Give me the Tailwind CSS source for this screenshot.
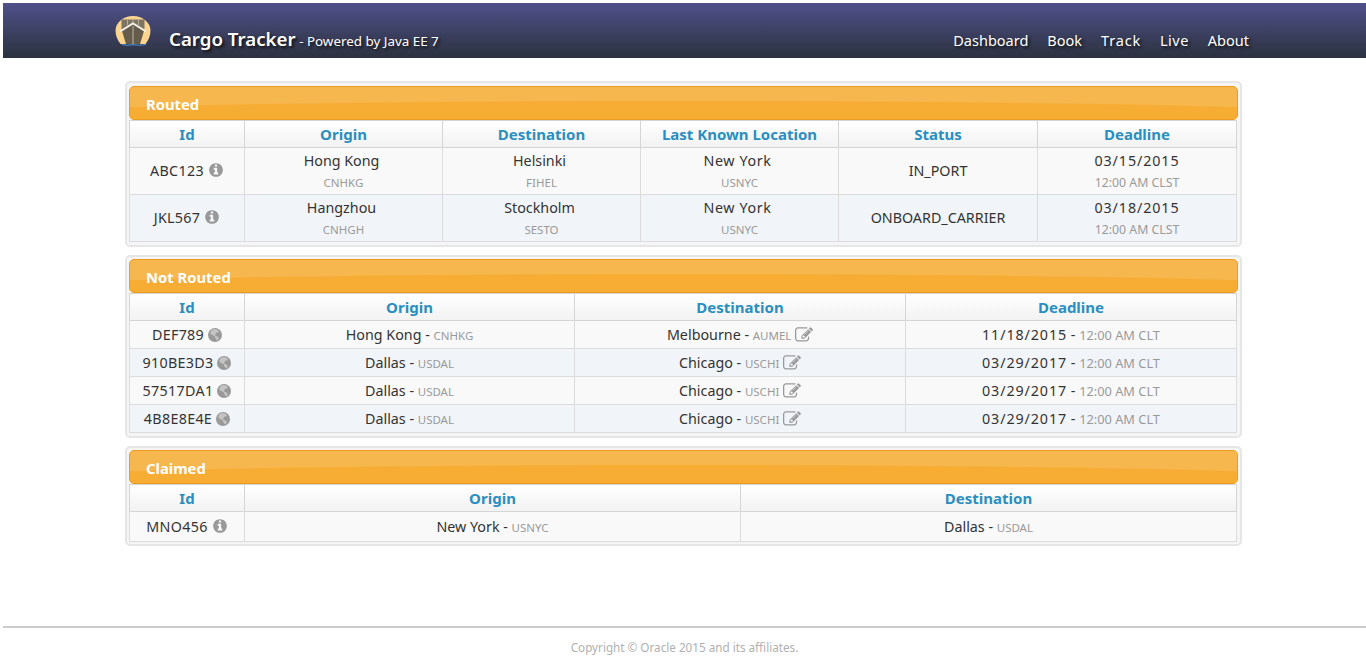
<!doctype html>
<html lang="en"><head><meta charset="utf-8"><title>Cargo Tracker</title>
<script src="https://cdn.jsdelivr.net/npm/@tailwindcss/browser@4"></script></head>
<body class="bg-white font-['Noto_Sans',sans-serif] text-[14.300px] text-[#333]">
<svg class="hidden"><defs>
<symbol id="info" viewBox="0 0 1792 1792"><path d="M1152 1376v-160q0-14-9-23t-23-9h-96v-512q0-14-9-23t-23-9h-320q-14 0-23 9t-9 23v160q0 14 9 23t23 9h96v320h-96q-14 0-23 9t-9 23v160q0 14 9 23t23 9h448q14 0 23-9t9-23zm-128-896v-160q0-14-9-23t-23-9h-192q-14 0-23 9t-9 23v160q0 14 9 23t23 9h192q14 0 23-9t9-23zm640 416q0 209-103 385.5t-279.5 279.5-385.5 103-385.5-103-279.5-279.5-103-385.5 103-385.5 279.5-279.5 385.5-103 385.5 103 279.5 279.5 103 385.5z"/></symbol>
<symbol id="globe" viewBox="0 0 14 14"><circle cx="7" cy="7" r="7"/><path fill="#e8e8e8" d="M4 1.500l3-.5 3 1 1 2-3 1-1 2.500 2.500 1 1.500 2-2 2-1.500-2-1-2.500-2.500-1-2-2 1-2z" opacity="0.550"/></symbol>
<symbol id="edit" viewBox="0 0 1792 1792"><path d="M888 1184l116-116-152-152-116 116v56h96v96h56zm440-720q-16-16-33 1l-350 350q-17 17-1 33t33-1l350-350q17-17 1-33zm80 594v190q0 119-84.500 203.500t-203.500 84.500h-832q-119 0-203.500-84.500t-84.500-203.500v-832q0-119 84.500-203.500t203.500-84.500h832q63 0 117 25 15 7 18 23 3 17-9 29l-49 49q-14 14-32 8-23-6-45-6h-832q-66 0-113 47t-47 113v832q0 66 47 113t113 47h832q66 0 113-47t47-113v-126q0-13 9-22l64-64q15-15 35-7t20 29zm-96-738l288 288-672 672h-288v-288zm444 132l-92 92-288-288 92-92q28-28 68-28t68 28l152 152q28 28 28 68t-28 68z"/></symbol>
</defs></svg>

<header class="mt-[3px] ml-[3px] h-[55px] bg-gradient-to-b from-[#50508a] to-[#2c3240] flex items-end [text-shadow:2px_2px_3px_#111] text-white">
  <svg class="ml-[112px] mb-[12px] w-[36px] h-[30px]" viewBox="0 0 36 30">
    <path fill="#fbd590" d="M18 0a17.500 15 0 0 1 17.500 14c0 6-2 10-5 14H5.500C2.500 24 .5 20 .5 14A17.500 15 0 0 1 18 0z"/>
    <path fill="#7d7463" d="M6.500 3.500h23V13h-23z"/>
    <path fill="#b8ad96" d="M12 3.500h1V9h-1zM23 3.500h1V9h-1zM17.500 3.500h1V7h-1z"/>
    <path fill="#655c4b" d="M18 8l11 7-4 13H11L7 15z"/>
    <path fill="#a39c8c" d="M17.300 10h1.400v18h-1.400z"/>
    <path fill="none" stroke="#f2efe6" stroke-width="2" d="M5 15.500L18 7.500l13 8"/>
    <path fill="none" stroke="#4a8fd0" stroke-width="1.200" d="M7 28.500q5 1.500 11 0 6 1.500 13 0"/>
  </svg>
  <div class="ml-[18px] mb-[3px] leading-[28px] whitespace-nowrap"><span class="text-[18.700px] font-semibold">Cargo Tracker</span><span class="text-[13.400px]"> - Powered by Java EE 7</span></div>
  <nav class="ml-auto mr-[117px] mb-[5px] flex gap-[19px] text-[14.500px] leading-[26px]"><span>Dashboard</span><span>Book</span><span class="tracking-[0.8px]">Track</span><span class="tracking-[0.5px]">Live</span><span>About</span></nav>
</header>

<main class="mt-[23px] ml-[125px] w-[1117px] flex flex-col gap-[8px]">

<section class="border-2 border-[#e6e6e6] rounded-[5px] bg-[#f5f5f5] pt-[3px] px-[2px] pb-[3px]">
  <h2 class="relative overflow-hidden h-[34px] rounded-[5px] border border-[#ee9a1c] bg-[#f7b74f] pl-[16px] pt-[6px] leading-[22px] text-[14.800px] font-bold text-white"><span class="absolute -left-[15%] top-[14px] w-[130%] h-[34px] rounded-[50%] bg-[#f7ac33]"></span><span class="relative">Routed</span></h2>
  <table class="w-[1107px] table-fixed border-collapse text-center">
    <colgroup><col class="w-[115px]"><col class="w-[198px]"><col class="w-[198px]"><col class="w-[198px]"><col class="w-[199px]"><col class="w-[199px]"></colgroup>
    <thead class="bg-gradient-to-b from-white to-[#f2f2f2] text-[#2a8fc0] font-bold text-[15px]"><tr class="h-[27px]">
      <th class="border border-[#d5d5d5]">Id</th><th class="border border-[#d5d5d5]">Origin</th><th class="border border-[#d5d5d5]">Destination</th><th class="border border-[#d5d5d5]">Last Known Location</th><th class="border border-[#d5d5d5]">Status</th><th class="border border-[#d5d5d5]">Deadline</th></tr></thead>
    <tbody class="leading-[21px]">
      <tr class="h-[47px] bg-[#f9f9f9]">
        <td class="border border-[#dcdcdc] pb-[2px] tracking-[0.3px]">ABC123 <svg class="inline w-[16px] h-[16px] fill-[#999] align-[-2px]"><use href="#info"/></svg></td>
        <td class="border border-[#dcdcdc]"><span class="mr-[4px]">Hong Kong</span><br><span class="text-[11.500px] text-[#999]">CNHKG</span></td>
        <td class="border border-[#dcdcdc]"><span class="mr-[4px]">Helsinki</span><br><span class="text-[11.500px] text-[#999]">FIHEL</span></td>
        <td class="border border-[#dcdcdc]"><span class="mr-[4px] tracking-[0.6px]">New York</span><br><span class="text-[11.500px] text-[#999]">USNYC</span></td>
        <td class="border border-[#dcdcdc] pb-[2px]">IN_PORT</td>
        <td class="border border-[#dcdcdc]"><span class="tracking-[0.9px]">03/15/2015</span><br><span class="text-[12.300px] text-[#999]">12:00 AM CLST</span></td>
      </tr>
      <tr class="h-[47px] bg-[#f1f5fa]">
        <td class="border border-[#dcdcdc] pb-[2px] tracking-[0.3px]">JKL567 <svg class="inline w-[16px] h-[16px] fill-[#999] align-[-2px]"><use href="#info"/></svg></td>
        <td class="border border-[#dcdcdc]"><span class="mr-[4px]">Hangzhou</span><br><span class="text-[11.500px] text-[#999]">CNHGH</span></td>
        <td class="border border-[#dcdcdc]"><span class="mr-[4px]">Stockholm</span><br><span class="text-[11.500px] text-[#999]">SESTO</span></td>
        <td class="border border-[#dcdcdc]"><span class="mr-[4px] tracking-[0.6px]">New York</span><br><span class="text-[11.500px] text-[#999]">USNYC</span></td>
        <td class="border border-[#dcdcdc] pb-[2px]">ONBOARD_CARRIER</td>
        <td class="border border-[#dcdcdc]"><span class="tracking-[0.9px]">03/18/2015</span><br><span class="text-[12.300px] text-[#999]">12:00 AM CLST</span></td>
      </tr>
    </tbody>
  </table>
</section>

<section class="border-2 border-[#e6e6e6] rounded-[5px] bg-[#f5f5f5] pt-[2px] px-[2px] pb-[3px]">
  <h2 class="relative overflow-hidden h-[34px] rounded-[5px] border border-[#ee9a1c] bg-[#f7b74f] pl-[16px] pt-[6px] leading-[22px] text-[14.800px] font-bold text-white"><span class="absolute -left-[15%] top-[14px] w-[130%] h-[34px] rounded-[50%] bg-[#f7ac33]"></span><span class="relative">Not Routed</span></h2>
  <table class="w-[1107px] table-fixed border-collapse text-center">
    <colgroup><col class="w-[115px]"><col class="w-[330px]"><col class="w-[331px]"><col class="w-[331px]"></colgroup>
    <thead class="bg-gradient-to-b from-white to-[#f2f2f2] text-[#2a8fc0] font-bold text-[15px]"><tr class="h-[27px]">
      <th class="border border-[#d5d5d5]">Id</th><th class="border border-[#d5d5d5]">Origin</th><th class="border border-[#d5d5d5]">Destination</th><th class="border border-[#d5d5d5]">Deadline</th></tr></thead>
    <tbody>
      <tr class="h-[28px] bg-[#f9f9f9]">
        <td class="border border-[#dcdcdc] tracking-[0.3px]">DEF789 <svg class="inline w-[14px] h-[14px] fill-[#999] align-[-2px]"><use href="#globe"/></svg></td>
        <td class="border border-[#dcdcdc]">Hong Kong - <span class="text-[11.500px] text-[#999]">CNHKG</span></td>
        <td class="border border-[#dcdcdc]">Melbourne - <span class="text-[11.500px] text-[#999]">AUMEL</span> <svg class="inline w-[18px] h-[18px] fill-[#999] align-[-4px]"><use href="#edit"/></svg></td>
        <td class="border border-[#dcdcdc]"><span class="tracking-[0.9px]">11/18/2015</span> - <span class="text-[12.800px] text-[#999]">12:00 AM CLT</span></td>
      </tr>
      <tr class="h-[28px] bg-[#f1f5fa]">
        <td class="border border-[#dcdcdc] tracking-[0.3px]">910BE3D3 <svg class="inline w-[14px] h-[14px] fill-[#999] align-[-2px]"><use href="#globe"/></svg></td>
        <td class="border border-[#dcdcdc]">Dallas - <span class="text-[11.500px] text-[#999]">USDAL</span></td>
        <td class="border border-[#dcdcdc]">Chicago - <span class="text-[11.500px] text-[#999]">USCHI</span> <svg class="inline w-[18px] h-[18px] fill-[#999] align-[-4px]"><use href="#edit"/></svg></td>
        <td class="border border-[#dcdcdc]"><span class="tracking-[0.9px]">03/29/2017</span> - <span class="text-[12.800px] text-[#999]">12:00 AM CLT</span></td>
      </tr>
      <tr class="h-[28px] bg-[#f9f9f9]">
        <td class="border border-[#dcdcdc] tracking-[0.3px]">57517DA1 <svg class="inline w-[14px] h-[14px] fill-[#999] align-[-2px]"><use href="#globe"/></svg></td>
        <td class="border border-[#dcdcdc]">Dallas - <span class="text-[11.500px] text-[#999]">USDAL</span></td>
        <td class="border border-[#dcdcdc]">Chicago - <span class="text-[11.500px] text-[#999]">USCHI</span> <svg class="inline w-[18px] h-[18px] fill-[#999] align-[-4px]"><use href="#edit"/></svg></td>
        <td class="border border-[#dcdcdc]"><span class="tracking-[0.9px]">03/29/2017</span> - <span class="text-[12.800px] text-[#999]">12:00 AM CLT</span></td>
      </tr>
      <tr class="h-[28px] bg-[#f1f5fa]">
        <td class="border border-[#dcdcdc] tracking-[0.3px]">4B8E8E4E <svg class="inline w-[14px] h-[14px] fill-[#999] align-[-2px]"><use href="#globe"/></svg></td>
        <td class="border border-[#dcdcdc]">Dallas - <span class="text-[11.500px] text-[#999]">USDAL</span></td>
        <td class="border border-[#dcdcdc]">Chicago - <span class="text-[11.500px] text-[#999]">USCHI</span> <svg class="inline w-[18px] h-[18px] fill-[#999] align-[-4px]"><use href="#edit"/></svg></td>
        <td class="border border-[#dcdcdc]"><span class="tracking-[0.9px]">03/29/2017</span> - <span class="text-[12.800px] text-[#999]">12:00 AM CLT</span></td>
      </tr>
    </tbody>
  </table>
</section>

<section class="border-2 border-[#e6e6e6] rounded-[5px] bg-[#f5f5f5] pt-[2px] px-[2px] pb-[2px]">
  <h2 class="relative overflow-hidden h-[34px] rounded-[5px] border border-[#ee9a1c] bg-[#f7b74f] pl-[16px] pt-[6px] leading-[22px] text-[14.800px] font-bold text-white"><span class="absolute -left-[15%] top-[14px] w-[130%] h-[34px] rounded-[50%] bg-[#f7ac33]"></span><span class="relative">Claimed</span></h2>
  <table class="w-[1107px] table-fixed border-collapse text-center">
    <colgroup><col class="w-[115px]"><col class="w-[496px]"><col class="w-[496px]"></colgroup>
    <thead class="bg-gradient-to-b from-white to-[#f2f2f2] text-[#2a8fc0] font-bold text-[15px]"><tr class="h-[27px]">
      <th class="border border-[#d5d5d5]">Id</th><th class="border border-[#d5d5d5]">Origin</th><th class="border border-[#d5d5d5]">Destination</th></tr></thead>
    <tbody>
      <tr class="h-[30px] bg-[#f9f9f9]">
        <td class="border border-[#dcdcdc] tracking-[0.3px]">MNO456 <svg class="inline w-[16px] h-[16px] fill-[#999] align-[-2px]"><use href="#info"/></svg></td>
        <td class="border border-[#dcdcdc]">New York - <span class="text-[11.500px] text-[#999]">USNYC</span></td>
        <td class="border border-[#dcdcdc]">Dallas - <span class="text-[11.500px] text-[#999]">USDAL</span></td>
      </tr>
    </tbody>
  </table>
</section>
</main>

<footer class="mt-[80px] ml-[3px] border-t-2 border-[#ccc] pt-[11px] text-center text-[11.700px] leading-[16px] text-[#b0b0b0]">Copyright © Oracle 2015 and its affiliates.</footer>
</body></html>
